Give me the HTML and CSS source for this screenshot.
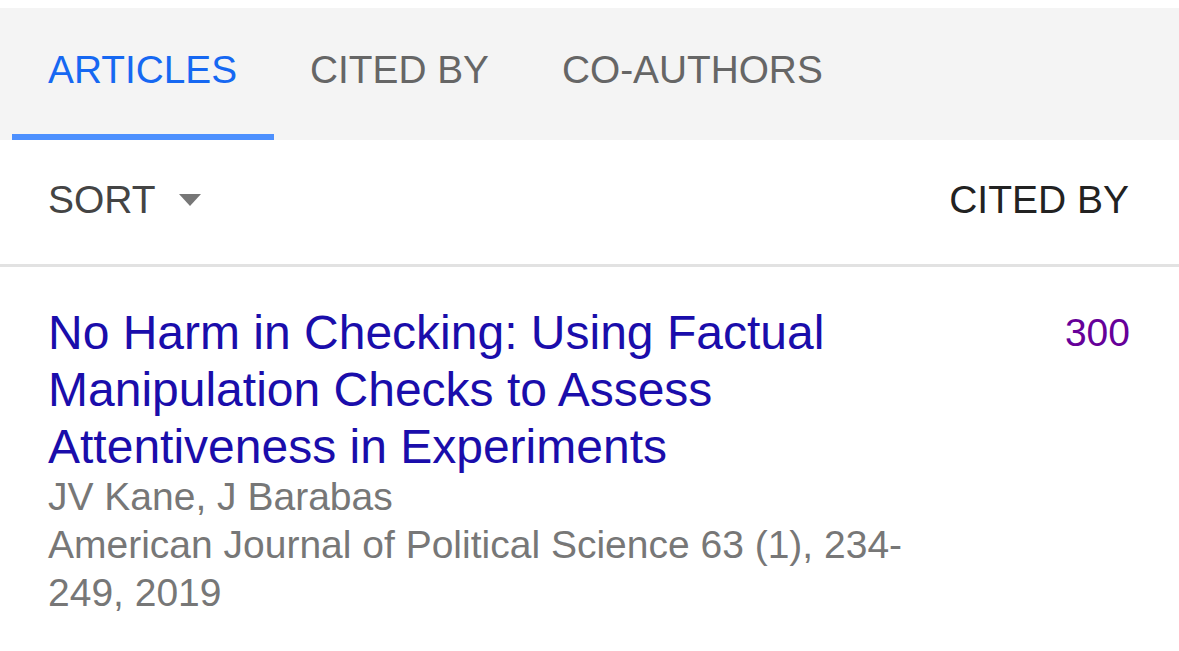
FILE: index.html
```html
<!DOCTYPE html>
<html lang="en">
<head>
<meta charset="utf-8">
<title>Articles</title>
<link rel="stylesheet" href="styles.css">
</head>
<body>
<div class="page">
  <nav class="tabs">
    <a class="tab tab-active">ARTICLES</a>
    <a class="tab">CITED BY</a>
    <a class="tab">CO-AUTHORS</a>
  </nav>
  <div class="sortbar">
    <div class="sort">
      <span>SORT</span>
      <svg class="caret" width="22" height="12" viewBox="0 0 22 12"><path d="M0 0 H22 L11 12 Z" fill="#777"/></svg>
    </div>
    <div class="cited-head">CITED BY</div>
  </div>
  <div class="article">
    <div class="article-main">
      <a class="article-title">No Harm in Checking: Using Factual Manipulation Checks to Assess Attentiveness in Experiments</a>
      <div class="meta">JV Kane, J Barabas</div>
      <div class="meta">American Journal of Political Science 63 (1), 234-249, 2019</div>
    </div>
    <div class="article-count">300</div>
  </div>
</div>
</body>
</html>
```
FILE: styles.css
```css
html, body {
  margin: 0;
  padding: 0;
  background: #fff;
}
body {
  font-family: "Liberation Sans", Arial, sans-serif;
}
.page {
  padding-top: 8px;
}
.tabs {
  display: flex;
  background: #f4f4f4;
  padding-left: 12px;
  height: 132px;
}
.tab {
  display: block;
  padding: 38px 37px 0 36px;
  font-size: 38.8px;
  line-height: 48px;
  color: #666;
  box-sizing: border-box;
  height: 132px;
  border-bottom: 6px solid transparent;
}
.tab-active {
  color: #1668f2;
  border-bottom-color: #4d90fe;
}
.sortbar {
  display: flex;
  justify-content: space-between;
  align-items: center;
  height: 127px;
  padding: 0 50px 5px 48px;
  box-sizing: border-box;
  border-bottom: 3px solid #e2e2e2;
  font-size: 39px;
  line-height: 48px;
}
.sort {
  display: flex;
  align-items: center;
  color: #444;
  gap: 23px;
}
.caret {
  display: block;
  margin-top: 1px;
}
.cited-head {
  color: #222;
}
.article {
  display: flex;
  padding: 37px 49px 0 48px;
}
.article-main {
  flex: 1;
  padding-right: 100px;
}
.article-title {
  display: block;
  color: #1a0dab;
  font-size: 48px;
  line-height: 57px;
  margin-bottom: -2px;
}
.meta {
  color: #777;
  font-size: 39px;
  line-height: 48px;
}
.article-count {
  color: #660099;
  font-size: 39px;
  line-height: 57px;
}
```
